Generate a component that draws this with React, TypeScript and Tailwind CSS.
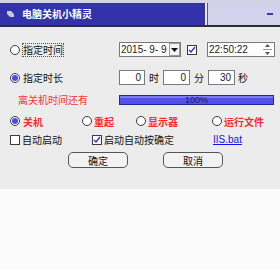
import React from "react";

const F = { fontFamily: '"Noto Sans CJK SC", "Noto Sans", sans-serif' };

function Radio({ on }: { on?: boolean }) {
  return (
    <span className="w-[10px] h-[10px] rounded-full border-[1.5px] border-[#3a3a3a] bg-white flex items-center justify-center shrink-0">
      {on && <span className="w-[6px] h-[6px] rounded-full bg-[#4a4ae8]" />}
    </span>
  );
}

function Check({ on }: { on?: boolean }) {
  return (
    <span className="w-[10px] h-[10px] border border-[#3a3a3a] bg-white flex items-center justify-center shrink-0">
      {on && (
        <svg width="8" height="8" viewBox="0 0 8 8">
          <path d="M1 4 L3 6 L7 1" stroke="#3030d0" strokeWidth="1.4" fill="none" />
        </svg>
      )}
    </span>
  );
}

function NumBox({ v, w }: { v: string; w: string }) {
  return (
    <div className={`${w} h-[15px] border border-[#7a7a7a] bg-white flex items-center justify-end pr-[3px] text-[10px] text-[#222]`} style={{ fontFamily: '"Liberation Sans", sans-serif' }}>
      {v}
    </div>
  );
}

export default function App() {
  return (
    <div className="w-[280px] h-[270px] bg-[#fbfbfb] flex flex-col" style={F}>
      {/* title bar */}
      <div className="h-[3px] bg-[#d2d2e6]" />
      <div className="h-[22px] flex">
        <div className="w-[205px] bg-[#3232aa] flex items-center">
          <svg width="7" height="6" viewBox="0 0 7 6" className="ml-[7px]">
            <path d="M0 0 H4 L7 3 V6 H3 L0 3 Z" fill="#c8c8d8" />
          </svg>
          <span className="ml-[8px] text-[10px] font-bold text-white leading-none">电脑关机小精灵</span>
        </div>
        <div className="w-[2px] bg-[#ececf4]" />
        <div className="w-[1px] bg-[#4a4ab8]" />
        <div className="flex-1 bg-[#d2d2ec] flex items-center justify-end pr-[7px]">
          <div className="w-[6px] h-[2px] bg-[#3a3aa8]" />
        </div>
      </div>
      <div className="h-[2px] bg-[#2c2c3c]" />

      {/* body */}
      <div className="h-[162px] bg-[#ececec] flex flex-col pl-[10px] text-[10px] text-[#111]">
        {/* row 1 */}
        <div className="h-[15px] mt-[15px] flex items-center">
          <div className="w-[109px] flex items-center">
            <Radio />
            <span className="ml-[2px] border border-dotted border-[#555] leading-[12px]">指定时间</span>
          </div>
          <div className="w-[62px] h-[15px] border border-[#7a7a7a] bg-white flex items-center overflow-hidden" style={{ fontFamily: '"Liberation Sans", sans-serif' }}>
            <span className="ml-[1px] text-[10px] text-[#222] whitespace-pre flex-1 min-w-0 overflow-hidden">2015- 9- 9</span>
            <div className="w-[11px] h-[13px] shrink-0 border border-[#9a9a9a] bg-[#f4f4f4] flex items-center justify-center">
              <svg width="7" height="4" viewBox="0 0 7 4"><path d="M0 0 H7 L3.5 4 Z" fill="#111" /></svg>
            </div>
          </div>
          <div className="ml-[6px]"><Check on /></div>
          <div className="ml-[10px] w-[68px] h-[15px] border border-[#7a7a7a] bg-white flex items-center" style={{ fontFamily: '"Liberation Sans", sans-serif' }}>
            <span className="ml-[1px] text-[10px] text-[#222] flex-1">22:50:22</span>
            <div className="w-[12px] h-[13px] flex flex-col items-center justify-center gap-[2px] mr-[1px]">
              <svg width="5" height="3" viewBox="0 0 5 3"><path d="M0 3 H5 L2.5 0 Z" fill="#555" /></svg>
              <div className="w-[9px] h-[1px] bg-[#999]" />
              <svg width="5" height="3" viewBox="0 0 5 3"><path d="M0 0 H5 L2.5 3 Z" fill="#555" /></svg>
            </div>
          </div>
        </div>

        {/* row 2 */}
        <div className="h-[15px] mt-[13px] flex items-center">
          <div className="w-[109px] flex items-center">
            <Radio on />
            <span className="ml-[3px] leading-[12px]">指定时长</span>
          </div>
          <NumBox v="0" w="w-[26px]" />
          <span className="w-[18px] text-center">时</span>
          <NumBox v="0" w="w-[27px]" />
          <span className="w-[18px] text-center">分</span>
          <NumBox v="30" w="w-[27px]" />
          <span className="ml-[3px]">秒</span>
        </div>

        {/* row 3 */}
        <div className="h-[10px] mt-[10px] flex items-center">
          <div className="w-[109px] pl-[8px] text-[#ff3030] leading-none">离关机时间还有</div>
          <div className="w-[155px] h-[10px] border border-[#2626a0] bg-[#5252ea] relative flex items-center justify-center">
            <div className="absolute left-0 right-0 top-0 h-[2px] bg-[#7c7cf4]" />
            <span className="relative text-[9px] leading-none text-[#1a1a5a]" style={{ fontFamily: '"Liberation Sans", sans-serif' }}>100%</span>
          </div>
        </div>

        {/* row 4 */}
        <div className="h-[14px] mt-[9px] flex items-center text-[#ff2a2a] font-bold">
          <div className="w-[72px] flex items-center"><Radio on /><span className="ml-[3px]">关机</span></div>
          <div className="w-[54px] flex items-center"><Radio /><span className="ml-[2px]">重起</span></div>
          <div className="w-[76px] flex items-center"><Radio /><span className="ml-[2px]">显示器</span></div>
          <div className="flex items-center"><Radio /><span className="ml-[2px]">运行文件</span></div>
        </div>

        {/* row 5 */}
        <div className="h-[15px] mt-[4px] flex items-center">
          <div className="w-[82px] flex items-center"><Check /><span className="ml-[2px]">自动启动</span></div>
          <div className="w-[121px] flex items-center"><Check on /><span className="ml-[2px]">启动自动按确定</span></div>
          <span className="text-[#1010ee] underline" style={{ fontFamily: '"Liberation Sans", sans-serif' }}>IIS.bat</span>
        </div>

        {/* row 6 */}
        <div className="h-[16px] mt-[5px] flex items-center">
          <button className="ml-[58px] w-[60px] h-[16px] rounded-[5px] border border-[#555] bg-[#f2f2f2] text-[10px] flex items-center justify-center">确定</button>
          <button className="ml-[35px] w-[60px] h-[16px] rounded-[5px] border border-[#555] bg-[#f2f2f2] text-[10px] flex items-center justify-center">取消</button>
        </div>
      </div>
    </div>
  );
}
